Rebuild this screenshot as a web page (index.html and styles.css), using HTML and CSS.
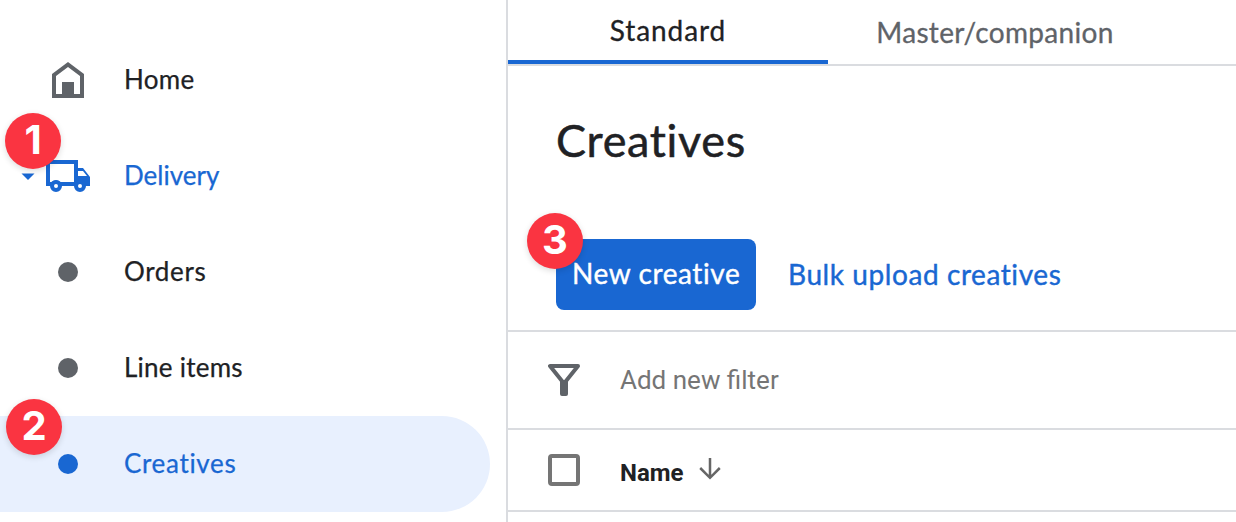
FILE: index.html
```html
<!DOCTYPE html>
<html lang="en">
<head>
<meta charset="utf-8">
<title>Creatives</title>
<link rel="stylesheet" href="styles.css">
</head>
<body>
<div class="app">
  <nav class="sidebar">
    <a class="nav-item">
      <svg class="nav-icon" width="136" height="96" viewBox="0 0 136 96"><path fill="#5f6368" fill-rule="evenodd" d="M68 30 84 42V66H52V42ZM68 35 56 44V62H80V44Z"/><path fill="#5f6368" d="M62 50h12v13H62z"/></svg>
      <span class="label home">Home</span>
    </a>
    <a class="nav-item active">
      <svg class="nav-icon" width="136" height="96" viewBox="0 0 136 96"><path fill="#1967d2" d="M21.500 45.500h13L28 52z"/><path fill="#1967d2" fill-rule="evenodd" d="M46 32h32v8h5l7 9v9h-6a6 6 0 0 1-8 0H60a6 6 0 0 1-8 0h-6zM50 36v18h1.500a6.500 6.500 0 0 1 9 0H74V36zM78 43v5h9l-4-5z"/><circle cx="56" cy="58" r="4" fill="#fff" stroke="#1967d2" stroke-width="4"/><circle cx="80" cy="58" r="4" fill="#fff" stroke="#1967d2" stroke-width="4"/></svg>
      <span class="label delivery">Delivery</span>
      <span class="badge badge-1">1</span>
    </a>
    <a class="nav-item"><span class="bullet"></span><span class="label orders">Orders</span></a>
    <a class="nav-item"><span class="bullet"></span><span class="label line-items">Line items</span></a>
    <a class="nav-item active selected"><span class="bullet"></span><span class="label creatives">Creatives</span><span class="badge badge-2">2</span></a>
  </nav>
  <main class="main">
    <div class="tabs">
      <div class="tab current"><span class="standard">Standard</span></div>
      <div class="tab"><span class="master">Master/companion</span></div>
    </div>
    <header class="heading"><h1 class="title">Creatives</h1></header>
    <div class="actions">
      <button class="button"><span class="new-creative">New creative</span><span class="badge badge-3">3</span></button>
      <a class="bulk">Bulk upload creatives</a>
    </div>
    <div class="filter">
      <svg width="32" height="32" viewBox="0 0 32 32"><path d="M2 2H30L18 17V30H14V17Z" fill="none" stroke="#5f6368" stroke-width="4" stroke-linejoin="round"/><path d="M14 16h4v14h-4z" fill="#5f6368"/></svg>
      <span class="placeholder">Add new filter</span>
    </div>
    <div class="columns">
      <span class="checkbox"></span>
      <span class="name">Name</span>
      <svg class="sort" width="22" height="22" viewBox="0 0 22 22"><path d="M11 -1V18.500M1.200 9 11 18.800 20.800 9" fill="none" stroke="#666" stroke-width="2.500"/></svg>
    </div>
  </main>
</div>
</body>
</html>
```
FILE: styles.css
```css
* { box-sizing: border-box; }
body { margin: 0; background: #fff; color: #202124; font: 26px/32px Lato, sans-serif; overflow: hidden; }
.app { display: flex; width: 1236px; height: 522px; overflow: hidden; }
.sidebar { width: 506px; flex: none; padding-top: 32px; }
.nav-item { position: relative; display: flex; align-items: center; height: 96px; width: 490px; }
.nav-icon { flex: none; display: block; margin-right: -12px; }
.label { padding-bottom: 2px; -webkit-text-stroke: 0.25px currentColor; }
.home { letter-spacing: 0.3px; }
.orders { letter-spacing: 0.65px; }
.line-items { letter-spacing: 0.24px; }
.creatives { letter-spacing: 0.68px; }
.active { color: #1967d2; }
.selected { background: #e8f0fe; border-radius: 0 48px 48px 0; }
.bullet { flex: none; width: 20px; height: 20px; margin: 0 46px 0 58px; border-radius: 50%; background: #5f6368; }
.active .bullet { background: #1967d2; }
.badge { position: absolute; width: 56px; height: 56px; border-radius: 50%; background: #fa3441; color: #fff; font: 700 40px/54px Inter, sans-serif; letter-spacing: 0; text-align: center; box-shadow: 0 2px 6px rgba(0, 0, 0, .14); -webkit-text-stroke: 0; }
.badge-1 { left: 5px; top: -15px; }
.badge-2 { left: 6px; top: -17px; }
.badge-3 { left: -29px; top: -26px; }
.main { flex: 1; border-left: 2px solid #dadce0; }
.tabs { display: flex; height: 66px; border-bottom: 2px solid #dadce0; font-size: 28px; -webkit-text-stroke: 0.3px currentColor; }
.tab { width: 334px; height: 64px; padding-top: 16px; color: #5f6368; text-align: center; }
.current { width: 320px; padding-top: 14px; color: #202124; border-bottom: 4px solid #1967d2; }
.standard { letter-spacing: 0.9px; }
.master { letter-spacing: 0.32px; }
.heading { height: 150px; padding: 46px 48px 0; }
.title { margin: 0; font-size: 45px; line-height: 56px; font-weight: 400; letter-spacing: 0.65px; -webkit-text-stroke: 0.5px currentColor; }
.actions { display: flex; align-items: flex-start; height: 116px; padding: 23px 48px 0; border-bottom: 2px solid #dadce0; font-size: 28px; line-height: 70px; }
.button { position: relative; width: 200px; height: 71px; margin: 0 32px 0 0; padding: 0 0 2px 16px; border: 0; border-radius: 8px; background: #1967d2; color: #fff; font: inherit; line-height: 69px; text-align: left; white-space: nowrap; }
.new-creative, .bulk { -webkit-text-stroke: 0.4px currentColor; letter-spacing: 0.58px; white-space: nowrap; }
.bulk { color: #1967d2; }
.filter { display: flex; align-items: center; gap: 40px; height: 98px; padding: 0 40px; border-bottom: 2px solid #dadce0; color: #757575; font-family: Roboto, sans-serif; }
.columns { display: flex; align-items: center; height: 82px; padding: 0 40px; border-bottom: 2px solid #dadce0; font-family: Roboto, sans-serif; }
.checkbox { width: 32px; height: 32px; margin-right: 40px; border: 4px solid #757575; border-radius: 4px; }
.name { font-weight: 700; font-size: 24px; padding-top: 6px; }
.sort { margin-left: 15px; overflow: visible; }
```
